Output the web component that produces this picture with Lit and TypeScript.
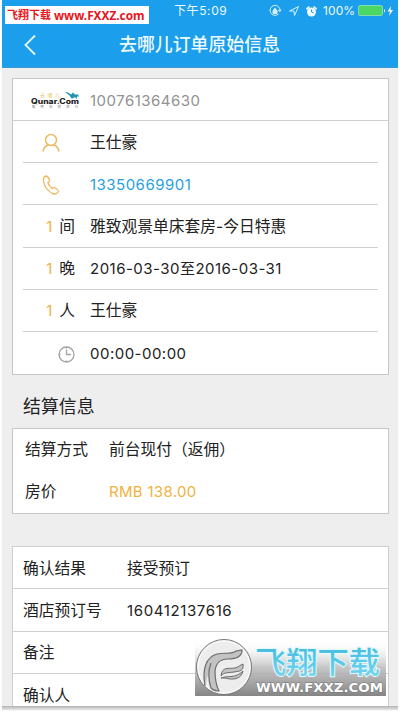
import { LitElement, html, css, svg } from "lit";
import { customElement } from "lit/decorators.js";

@customElement("app-root")
export class AppRoot extends LitElement {
  static styles = css`
    :host {
      display: block;
      position: relative;
      box-sizing: border-box;
      width: 400px;
      height: 711px;
      overflow: hidden;
      background: #fdfdfd;
      padding: 0 2px 0 2px;
      font: 15.75px/20px Inter, "Noto Sans CJK SC", sans-serif;
      color: #222;
      white-space: nowrap;
    }
    * { box-sizing: border-box; }
    svg { display: block; overflow: visible; flex: none; }
    .screen { height: 706px; overflow: hidden; background: #eeeeee; }
    .shade { height: 5px; background: linear-gradient(#b4b4b4, #d8d8d8 60%, #fff); }
    header { height: 68px; background: #1b9eeb; border-bottom: 1px solid #3f98cf; color: #eefaff; }
    .status { display: flex; align-items: center; height: 22px; font-size: 12px; }
    .time { margin-left: 172px; width: 95px; letter-spacing: 0.6px; }
    .lock { margin-left: 0; }
    .arrow { margin-left: 8px; }
    .alarm { margin-left: 7px; }
    .status .pct { margin-left: 6px; width: 35px; font-size: 12px; letter-spacing: 0.1px; }
    .nav { display: flex; align-items: center; height: 46px; font-size: 17.9px; font-weight: 500; }
    .nav svg { margin-left: 22px; }
    .nav span { margin-left: 83px; }
    .badge {
      position: absolute; left: 5px; top: 6px; width: 144px; height: 18px;
      background: #fff; color: #e5161d; display: flex; align-items: center;
      font: 700 11px/18px "Noto Sans", "Noto Sans CJK SC", sans-serif; padding-left: 2px; gap: 3px;
    }
    .badge .url { font-size: 11.8px; }
    .card { margin: 0 10px; width: 377px; background: #fff; border: 1px solid #c6c6c6; }
    .first { margin-top: 10px; height: 297px; }
    .row { display: flex; align-items: center; height: 42.2px; margin: 0 10px; padding: 2px 0 0; border-bottom: 1px solid #d0d0d0; }
    .row.top { margin: 0; padding-left: 10px; height: 42px; }
    .row.last { border: 0; }
    .lead { width: 67px; display: flex; align-items: center; justify-content: flex-end; padding-right: 15px; gap: 8px; flex: none; }
    .lead.icon { justify-content: flex-start; padding-left: 19px; }
    .lead.brand { padding-right: 11px; }
    .orange { color: #f0b240; }
    .blue { color: #2b9fdd; }
    .grey { color: #929292; }
    .num { font-size: 15px; letter-spacing: 0.48px; }
    .lead .num { letter-spacing: 0; margin-right: -1px; }
    h2 { margin: 22px 0 0 21px; height: 31px; font-size: 17.9px; line-height: 20px; font-weight: 400; }
    .second { height: 86px; padding-left: 12px; }
    .pair { display: flex; align-items: center; height: 42px; }
    .pair b { font-weight: 400; width: 84px; }
    .price { letter-spacing: 0.3px; }
    .third { margin-top: 32px; height: 180px; border-color: #cfcfcf; }
    .third .pair { height: 42.4px; padding: 2px 0 0 10px; border-bottom: 1px solid #d0d0d0; }
    .third .pair b { width: 104px; }
    .third .num { letter-spacing: 0.62px; }
    .mark { position: absolute; left: 195px; top: 639px; }
  `;

  private lead(n: string, unit: string, value: unknown) {
    return html`<div class="row"><div class="lead"><span class="orange num">${n}</span><span>${unit}</span></div>${value}</div>`;
  }

  private watermark() {
    return svg`<svg class="mark" width="191" height="57" viewBox="0 0 191 57">
      <defs>
        <linearGradient id="fade" x2="0" y2="1"><stop stop-color="#fff" stop-opacity="0"/><stop offset=".5" stop-color="#bbb" stop-opacity=".85"/><stop offset="1" stop-color="#858585"/></linearGradient>
        <linearGradient id="sky" x2="0" y2="1"><stop stop-color="#35b5dc"/><stop offset="1" stop-color="#7edaf2"/></linearGradient>
      </defs>
      <rect width="191" height="57" fill="url(#fade)"/>
      <circle cx="29" cy="28" r="27.500" fill="#ededed" stroke="#777"/>
      <circle cx="29" cy="28" r="26" fill="none" stroke="#fff"/>
      <path d="M10 47C7 30 11 18 22 15c8-2 14 1 19-3l6-1c0 7-6 9-14 9-7 0-12 3-13 12 0 8 1 14 4 20q-5 0-8-3c-3-9-3-17 0-25" fill="#c3c3c3" stroke="#6c6c6c" stroke-width="1.200"/>
      <path d="M26 37c1-10 8-7 14-8 4-1 5-3 8-4 1 7-3 7-9 8-6 1-10 0-13 4Zm0 2c8-3 14 1 22-7-2 9-11 9-18 7Z" fill="#c3c3c3" stroke="#6c6c6c"/>
      <text x="60" y="34" textLength="125" lengthAdjust="spacingAndGlyphs" font-family="Noto Sans CJK SC" font-size="30" font-weight="500" fill="url(#sky)" stroke="#e4faff" stroke-width="2" paint-order="stroke">飞翔下载</text>
      <text x="61" y="53" textLength="127" lengthAdjust="spacingAndGlyphs" font-family="DejaVu Sans" font-size="12.500" font-weight="700" fill="#fff" stroke="#777" stroke-width="1" paint-order="stroke">WWW.FXXZ.COM</text>
    </svg>`;
  }

  render() {
    return html`
      <div class="screen">
        <header>
          <div class="status">
            <span class="time">下午5:09</span>
            <svg class="lock" width="12" height="12" viewBox="0 0 12 12" fill="none" stroke="#d4f1ff"><path d="M9.500 9A5 5 0 1 1 11 6M9 5l2 1.500L12 4.500"/><path d="M4 5.500h4v3H4ZM5 5V4q1-1 2 0v1" fill="#d4f1ff"/></svg>
            <svg class="arrow" width="10" height="10" viewBox="0 0 10 10" fill="none" stroke="#d4f1ff"><path d="M.5 5 9.500.5 5.500 9.500 5 5Z"/></svg>
            <svg class="alarm" width="11" height="11" viewBox="0 0 11 11" fill="#eefaff"><circle cx="5.500" cy="6" r="4.500"/><path d="M0 2.500 2.500 0 4 1 1 4ZM11 2.500 8.500 0 7 1l3 3Z"/><path d="M5.500 3.500V6L7.500 7" fill="none" stroke="#1b9eeb"/></svg>
            <span class="pct">100%</span>
            <svg width="36" height="12" viewBox="0 0 36 12"><rect x=".5" y=".5" width="24" height="10" rx="1.500" fill="#4bd763" stroke="#83dcb0"/><path d="M26 4q2 1.500 0 4Z" fill="#eefaff"/><path d="M33 1 29.500 6.500H32L31 11l4-6h-2.500Z" fill="#eefaff"/></svg>
          </div>
          <div class="nav">
            <svg width="12" height="20" viewBox="0 0 12 20" fill="none" stroke="#e5f7ff" stroke-width="1.800"><path d="M11 .5 1.500 10 11 19.500"/></svg>
            <span>去哪儿订单原始信息</span>
          </div>
        </header>
        <div class="card first">
          <div class="row top"><div class="lead brand">
            <svg width="48" height="17" viewBox="0 0 48 17"><text x="9" y="5" font-size="5" textLength="20" fill="#e9bf5e" font-family="Noto Sans CJK SC">去哪儿</text><path d="m34 0 3 .5 3 2 2-2 2 2h3l1 2-2 0-.5 3-1.500-2.500-2.500 1.500-1 0-2-3Z" fill="#2794ad"/><text x="0" y="11.500" textLength="48" lengthAdjust="spacingAndGlyphs" font-size="7.200" font-weight="800" font-family="Inter" fill="#222">Qunar.Com</text><text x="1" y="16" textLength="46" font-size="3.200" fill="#777" font-family="Noto Sans CJK SC">聪明你的旅行</text></svg>
          </div><span class="grey num">100761364630</span></div>
          <div class="row"><div class="lead icon"><svg width="18" height="20" viewBox="0 0 18 20" fill="none" stroke="#eebb65" stroke-width="1.500"><circle cx="9" cy="7" r="5.500"/><path d="M1 18.500q1-5 5-6.500M17 18.500q-1-5-5-6.500"/></svg></div>王仕豪</div>
          <div class="row"><div class="lead icon"><svg width="18" height="20" viewBox="0 0 18 20" fill="none" stroke="#eebb65" stroke-width="1.400"><path d="M4 1Q1 2 1.500 6q1 8 9 12.500 4 1.500 6-2 .5-1-4-4-1-.5-2.500 1-3-2-4-6 2-1 1.500-2.500Q6 1 4 1Z"/></svg></div><span class="blue num">13350669901</span></div>
          ${this.lead("1", "间", html`<span>雅致观景单床套房-今日特惠</span>`)}
          ${this.lead("1", "晚", html`<span class="num">2016-03-30至2016-03-31</span>`)}
          ${this.lead("1", "人", html`<span>王仕豪</span>`)}
          <div class="row last"><div class="lead"><svg width="17" height="17" viewBox="0 0 17 17" fill="none" stroke="#a4a4a4" stroke-width="1.300"><circle cx="8.500" cy="8.500" r="7.500"/><path d="M8.500 3.500v5H13M8.500 1v1.500M8.500 14.500V16M1 8.500h1.500"/></svg></div><span class="num">00:00-00:00</span></div>
        </div>
        <h2>结算信息</h2>
        <div class="card second">
          <div class="pair"><b>结算方式</b><span>前台现付（返佣）</span></div>
          <div class="pair"><b>房价</b><span class="orange num price">RMB 138.00</span></div>
        </div>
        <div class="card third">
          <div class="pair"><b>确认结果</b><span>接受预订</span></div>
          <div class="pair"><b>酒店预订号</b><span class="num">160412137616</span></div>
          <div class="pair"><b>备注</b></div>
          <div class="pair"><b>确认人</b></div>
        </div>
      </div>
      <div class="shade"></div>
      <div class="badge"><span>飞翔下载</span><span class="url">www.FXXZ.com</span></div>
      ${this.watermark()}
    `;
  }
}
